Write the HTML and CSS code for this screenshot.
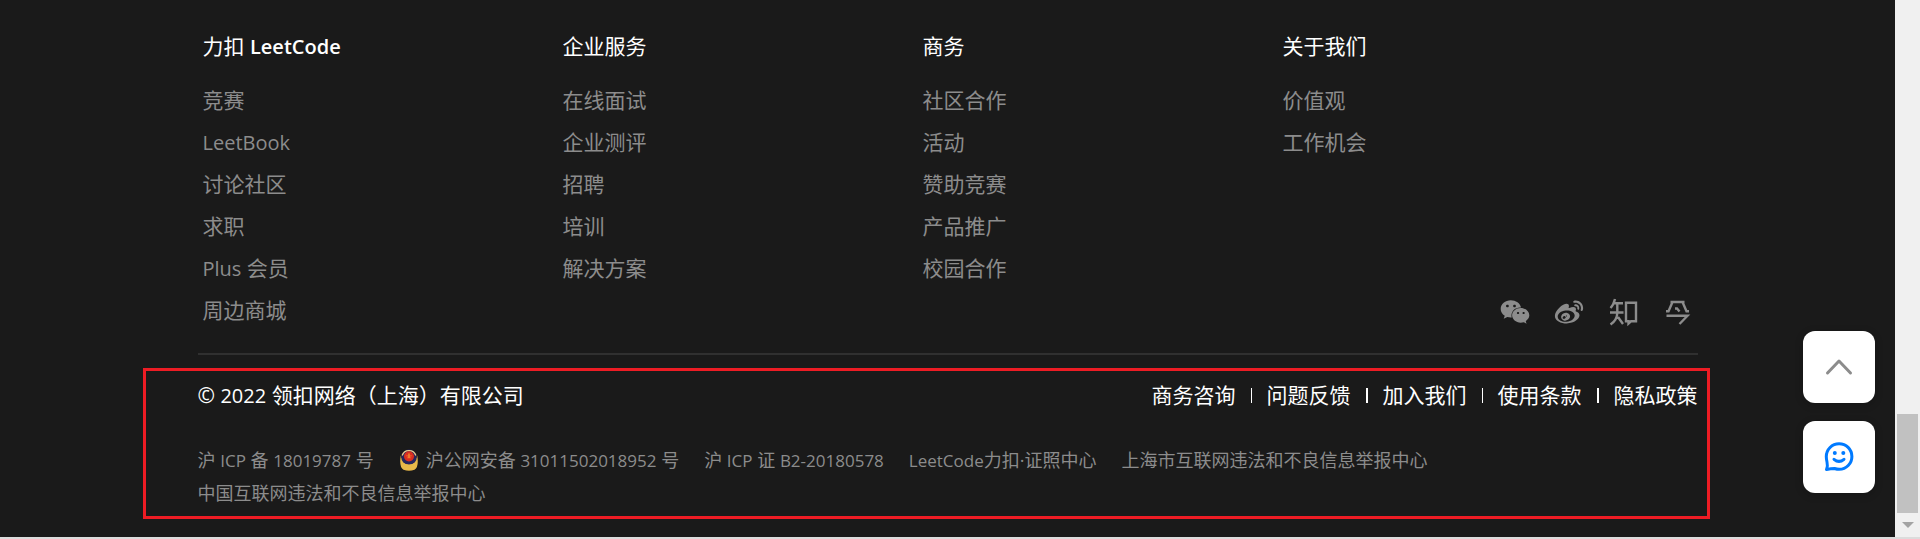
FILE: index.html
```html
<!DOCTYPE html>
<html lang="zh-CN">
<head>
<meta charset="utf-8">
<title>力扣 LeetCode</title>
<link rel="stylesheet" href="styles.css">
</head>
<body>
<div class="viewport">
  <footer class="footer">
    <div class="container">
      <div class="top">
        <nav class="column" aria-labelledby="h1">
          <h2 id="h1">力扣 <span class="latin">LeetCode</span></h2>
          <a href="#">竞赛</a>
          <a href="#"><span class="latin">LeetBook</span></a>
          <a href="#">讨论社区</a>
          <a href="#">求职</a>
          <a href="#"><span class="latin">Plus</span> 会员</a>
          <a href="#">周边商城</a>
        </nav>
        <nav class="column" aria-labelledby="h2">
          <h2 id="h2">企业服务</h2>
          <a href="#">在线面试</a>
          <a href="#">企业测评</a>
          <a href="#">招聘</a>
          <a href="#">培训</a>
          <a href="#">解决方案</a>
        </nav>
        <nav class="column" aria-labelledby="h3">
          <h2 id="h3">商务</h2>
          <a href="#">社区合作</a>
          <a href="#">活动</a>
          <a href="#">赞助竞赛</a>
          <a href="#">产品推广</a>
          <a href="#">校园合作</a>
        </nav>
        <div class="last">
          <nav class="column" aria-labelledby="h4">
            <h2 id="h4">关于我们</h2>
            <a href="#">价值观</a>
            <a href="#">工作机会</a>
          </nav>
          <div class="social">
            <a href="#" aria-label="微信"><svg viewBox="0 -32 576 576"><path d="M385.2 167.6c6.4 0 12.6.3 18.8 1.1C387.4 90.3 303.3 32 207.7 32 100.5 32 13 104.8 13 197.4c0 53.4 29.3 97.5 77.9 131.6l-19.3 58.6 68-34.1c24.4 4.8 43.8 9.7 68.2 9.7 6.2 0 12.1-.3 18.3-.8-4-12.9-6.2-26.6-6.2-40.8-.1-84.9 72.9-154 165.3-154zm-104.5-52.9c14.5 0 24.2 9.7 24.2 24.4 0 14.5-9.7 24.2-24.2 24.2-14.8 0-29.3-9.7-29.3-24.2.1-14.7 14.6-24.4 29.3-24.4zm-136.4 48.6c-14.5 0-29.3-9.7-29.3-24.2 0-14.8 14.8-24.4 29.3-24.4 14.8 0 24.4 9.7 24.4 24.4 0 14.6-9.6 24.2-24.4 24.2zM563 319.4c0-77.9-77.9-141.3-165.4-141.3-92.7 0-165.4 63.4-165.4 141.3S305 460.7 397.6 460.7c19.3 0 38.9-5.1 58.6-9.9l53.4 29.3-14.8-48.6C534 402.1 563 363.2 563 319.4zm-219.1-24.5c-9.7 0-19.3-9.7-19.3-19.6 0-9.7 9.7-19.3 19.3-19.3 14.8 0 24.4 9.7 24.4 19.3 0 10-9.7 19.6-24.4 19.6zm107.1 0c-9.7 0-19.3-9.7-19.3-19.6 0-9.7 9.7-19.3 19.3-19.3 14.5 0 24.4 9.7 24.4 19.3 0 10-9.9 19.6-24.4 19.6z"/></svg></a>
            <a href="#" aria-label="微博"><svg viewBox="-16 -32 544 544"><path d="M407 177.6c7.6-24-13.4-46.8-37.4-41.7-22 4.8-28.8-28.1-7.1-32.8 50.1-10.9 92.3 37.1 76.5 84.8-6.8 21.2-38.8 10.8-32-10.3zM214.8 446.7C108.5 446.7 0 395.3 0 310.4c0-44.3 28-95.4 76.3-143.7C176 67 279.5 65.8 249.9 161c-4 13.1 12.3 5.7 12.3 6 79.5-33.6 140.5-16.8 114 51.4-3.7 9.4 1.1 10.9 8.3 13.1 135.7 42.3 34.8 215.2-169.7 215.2zm143.7-146.3c-5.4-55.7-78.5-94-163.4-85.7-84.8 8.6-148.8 60.3-143.4 116s78.5 94 163.4 85.7c84.8-8.6 148.8-60.3 143.4-116zM347.9 35.1c-25.9 5.6-16.8 43.7 8.3 38.3 72.3-15.2 134.8 52.8 111.7 124-7.4 24.2 29.1 37 37.4 12 31.9-99.8-55.1-195.9-157.4-174.3zm-78.5 311c-17.1 38.8-66.8 60-109.1 46.3-40.8-13.1-58-53.4-40.3-89.7 17.7-35.4 63.1-55.4 103.4-45.1 42 10.8 63.1 50.2 46 88.5zm-86.3-30c-12.9-5.4-30 .3-38 12.9-8.3 12.9-4.3 28 8.6 34 13.1 6 30.8.3 39.1-12.9 8-13.1 3.7-28.3-9.7-34zm32.6-13.4c-5.1-1.7-11.4.6-14.3 5.4-2.9 5.1-1.4 10.6 3.7 12.9 5.1 2 11.7-.3 14.6-5.4 2.8-5.2 1.1-10.9-4-12.9z"/></svg></a>
            <a href="#" aria-label="知乎"><svg class="line" viewBox="0 0 30 30"><path d="M7 2Q5.500 8 2.500 11M5 6.200H15M2 15.500H15.500M9.300 6.200V15.500Q9.300 23 2.500 27.500M10 20L15 27M18 5.700H28V24.300H23L20.500 26.500V24.300H18Z"/></svg></a>
            <a href="#" aria-label="掘金"><svg class="line" viewBox="0 0 30 30"><path d="M4 14.300H6.500L10.500 5M8.500 5H22.500M20.500 5L24.500 14.300H27M13 11.500H15L17.500 14.500M4.500 18.800H25.500L17.500 27"/></svg></a>
          </div>
        </div>
      </div>
      <div class="legal">
        <div class="legal-row">
          <p class="copyright">© <span class="latin">2022</span> 领扣网络（上海）有限公司</p>
          <nav class="policies" aria-label="政策">
            <a href="#">商务咨询</a><i></i><a href="#">问题反馈</a><i></i><a href="#">加入我们</a><i></i><a href="#">使用条款</a><i></i><a href="#">隐私政策</a>
          </nav>
        </div>
        <div class="records">
          <a href="#">沪 <span class="latin">ICP</span> 备 <span class="latin">18019787</span> 号</a>
          <a href="#" class="police"><svg viewBox="0 0 20 24"><path fill="#e9b949" d="M1 7Q-1 20 4 22.500Q10 25 16 22.500Q21 20 19 7L15 15H5Z"/><path fill="#f6d98a" d="M3 17Q10 21 17 17L16 20Q10 23 4 20Z"/><circle cx="10" cy="9" r="8.500" fill="#26265c"/><path fill="none" stroke="#edcf8b" stroke-width="1.500" d="M2.500 7A8 8 0 0 1 17.500 7"/><circle cx="10" cy="8" r="5.500" fill="#d92d20"/><path fill="#f07a2b" d="M9 5h2v2h2v1h-2l1 2h-4l1-2H7V7h2Z"/><path fill="#e9b949" d="M2 14Q10 20 18 14L17 20Q10 24 3 20Z"/></svg>沪公网安备 <span class="latin">31011502018952</span> 号</a>
          <a href="#">沪 <span class="latin">ICP</span> 证 <span class="latin">B2-20180578</span></a>
          <a href="#"><span class="latin">LeetCode</span>力扣·证照中心</a>
          <a href="#">上海市互联网违法和不良信息举报中心</a>
          <a href="#">中国互联网违法和不良信息举报中心</a>
        </div>
        <div class="highlight"></div>
      </div>
    </div>
    <div class="floating">
      <button type="button" aria-label="回到顶部"><svg class="up" viewBox="0 0 36 36"><path d="M6.500 24L18 12L29.500 24"/></svg></button>
      <button type="button" aria-label="反馈"><svg class="chat" viewBox="0 0 36 36"><path d="M5.500 30.500Q7 27 6 23Q5.300 20 5.300 17.500A12.800 12.800 0 1 1 18.200 30.300Q16 30.300 13.500 29.500Q10 29.500 5.500 30.500Z"/><path d="M13 20.300Q18 24.500 23 20.300"/><circle cx="13.800" cy="14" r="2"/><circle cx="22.300" cy="14" r="2"/></svg></button>
    </div>
  </footer>
  <div class="scrollbar" aria-hidden="true">
    <div class="thumb"></div>
    <svg viewBox="0 0 12 6"><path d="M0 0H12L6 6Z"/></svg>
  </div>
</div>
</body>
</html>
```
FILE: styles.css
```css
* { box-sizing: border-box; }
body {
  margin: 0;
  background: #dcdcdc;
  color: #fff;
  font-family: "Open Sans", "Noto Sans CJK SC", sans-serif;
  font-size: 21px;
}
a { color: inherit; text-decoration: none; }
h2, p { margin: 0; }
.latin { font-size: 20px; line-height: 1; }
.viewport { display: flex; margin-bottom: 2px; }
.footer {
  position: relative;
  flex: 1;
  background: #1a1a1a;
  padding: 25px 24px 27px;
}
.container { max-width: 1500px; margin: 0 auto; }
.top {
  display: grid;
  grid-template-columns: 360px 360px 360px 1fr;
  padding: 0 6px 22px 5px;
  border-bottom: 2px solid #303030;
}
.column {
  display: flex;
  flex-direction: column;
  align-items: flex-start;
  line-height: 42px;
  color: #8c8c8c;
}
.column a { height: 42px; }
.column h2 {
  height: 42px;
  margin-bottom: 12px;
  color: #fff;
  font-size: 21px;
  font-weight: 400;
}
.column h2 .latin { font-weight: 600; }
.last { display: flex; flex-direction: column; justify-content: space-between; }
.social { display: flex; justify-content: flex-end; gap: 24px; padding-bottom: 4px; }
.social a { display: flex; }
.social svg { width: 30px; height: 30px; fill: #8c8c8c; }
.social .line { fill: none; stroke: #8c8c8c; stroke-width: 2.4; }
.legal { position: relative; padding-top: 24px; }
.legal-row { display: flex; justify-content: space-between; height: 32px; line-height: 32px; }
.policies { display: flex; align-items: center; gap: 15px; }
.policies i { width: 1px; height: 15px; background: #fff; }
.policies i:nth-of-type(even) { width: 2px; }
.records {
  display: flex;
  flex-wrap: wrap;
  column-gap: 25px;
  margin-top: 33px;
  max-width: 1300px;
  font-size: 18px;
  line-height: 33px;
  color: #8c8c8c;
}
.records a { height: 33px; }
.records .latin { font-size: 17px; }
.police svg { width: 20px; height: 22px; margin-right: 7px; vertical-align: -4px; }
.highlight {
  position: absolute;
  inset: 13px -12px -9px -55px;
  border: 3px solid #ed1c24;
  pointer-events: none;
}
.floating {
  position: absolute;
  right: 20px;
  bottom: 44px;
  display: grid;
  gap: 18px;
}
.floating button {
  width: 72px;
  height: 72px;
  padding: 18px;
  border: 0;
  border-radius: 12px;
  background: #fff;
  box-shadow: 0 2px 8px #0003;
}
.floating svg { display: block; width: 36px; height: 36px; fill: none; stroke-linecap: round; stroke-linejoin: round; }
.up { stroke: #8c8c8c; stroke-width: 3; }
.chat { stroke: #007aff; stroke-width: 3; }
.chat circle { fill: #007aff; stroke: none; }
.scrollbar {
  width: 25px;
  background: #f0f0f0;
  display: flex;
  flex-direction: column;
  align-items: center;
  justify-content: flex-end;
  gap: 9px;
  padding: 0 2px 9px;
}
.thumb { width: 21px; height: 99px; background: #c1c1c1; }
.scrollbar svg { width: 12px; height: 6px; fill: #a3a3a3; }
```
